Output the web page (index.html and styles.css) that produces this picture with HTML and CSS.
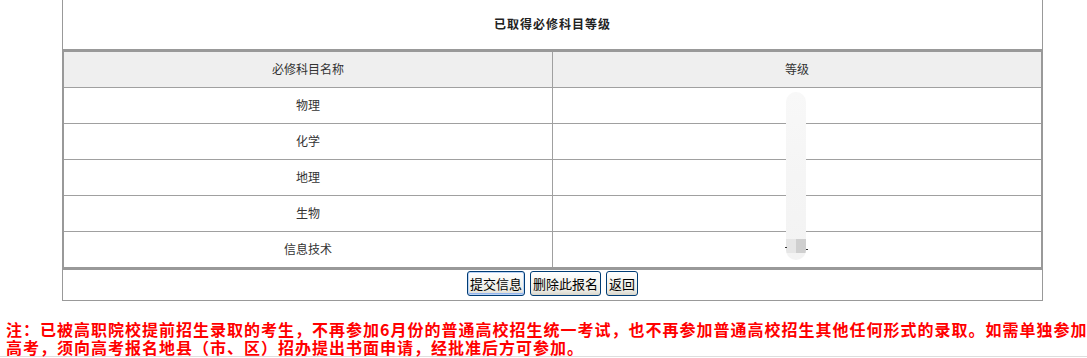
FILE: index.html
```html
<!DOCTYPE html>
<html lang="zh-CN">
<head>
<meta charset="utf-8">
<title>已取得必修科目等级</title>
<link rel="stylesheet" href="styles.css">
</head>
<body>
<div class="panel">
  <div class="caption">已取得必修科目等级</div>
  <div class="grades">
    <table class="grade-table">
      <thead>
        <tr><th class="name-col">必修科目名称</th><th>等级</th></tr>
      </thead>
      <tbody>
        <tr><td class="name-col">物理</td><td></td></tr>
        <tr><td class="name-col">化学</td><td></td></tr>
        <tr><td class="name-col">地理</td><td></td></tr>
        <tr><td class="name-col">生物</td><td></td></tr>
        <tr class="last"><td class="name-col">信息技术</td><td></td></tr>
      </tbody>
    </table>
    <div class="redact"><span class="tick tick-l"></span><span class="tick tick-r"></span></div>
  </div>
  <div class="actions">
    <button class="btn btn-focus" type="button">提交信息</button>
    <button class="btn" type="button">删除此报名</button>
    <button class="btn" type="button">返回</button>
  </div>
</div>
<p class="note">注：已被高职院校提前招生录取的考生，不再参加6月份的普通高校招生统一考试，也不再参加普通高校招生其他任何形式的录取。如需单独参加<br>高考，须向高考报名地县（市、区）招办提出书面申请，经批准后方可参加。</p>
<div class="rule"></div>
</body>
</html>
```
FILE: styles.css
```css
html, body {
  margin: 0;
  padding: 0;
  background: #fff;
}
body {
  font-family: "Noto Sans CJK SC", "Noto Sans", sans-serif;
  font-size: 12px;
  color: #333;
}
.panel {
  box-sizing: border-box;
  width: 981px;
  margin-left: 62px;
  display: flex;
  flex-direction: column;
}
.caption {
  box-sizing: border-box;
  height: 49px;
  padding-bottom: 3px;
  border-left: 1px solid #999;
  border-right: 1px solid #999;
  display: flex;
  align-items: center;
  justify-content: center;
  font-weight: bold;
  font-size: 12px;
  letter-spacing: 1px;
  color: #222;
}
.grades {
  position: relative;
}
.grade-table {
  box-sizing: border-box;
  width: 981px;
  table-layout: fixed;
  border-collapse: separate;
  border-spacing: 0;
  border-style: solid;
  border-color: #999;
  border-width: 3px 2px;
}
.grade-table th,
.grade-table td {
  height: 33px;
  padding: 0 0 2px;
  text-align: center;
  vertical-align: middle;
  font-weight: normal;
  font-size: 12px;
  color: #333;
  border-bottom: 1px solid #a0a0a0;
}
.grade-table th {
  background: #efefef;
}
.grade-table .last td {
  border-bottom: none;
}
.grade-table .name-col {
  width: 488px;
  border-right: 1px solid #a0a0a0;
}
.redact {
  position: absolute;
  left: 724px;
  top: 43px;
  width: 20px;
  height: 168px;
  border-radius: 10px;
  background:
    linear-gradient(to right, #e6e6e6 50%, #cfcfcf 50%) 0 147px / 100% 14px no-repeat,
    linear-gradient(to bottom, #f8f8f8 0, #f5f5f5 50%, #f3f3f3 100%);
}
.tick {
  position: absolute;
  top: 155px;
  width: 2px;
  height: 1px;
  background: #333;
}
.tick-l { left: -1px; }
.tick-r { right: -2px; top: 157px; }
.actions {
  box-sizing: border-box;
  height: 31px;
  border-left: 1px solid #999;
  border-right: 1px solid #999;
  border-bottom: 1px solid #999;
  display: flex;
  justify-content: center;
  align-items: flex-start;
  gap: 5px;
  padding-top: 1px;
}
.btn {
  box-sizing: border-box;
  height: 25px;
  margin: 0;
  padding: 0 2px;
  border: 1px solid #003c74;
  border-radius: 3px;
  background: linear-gradient(to bottom, #ffffff 0%, #f6f6f2 40%, #ecebe4 80%, #d8d6cc 100%);
  font-family: "Noto Sans CJK SC", "Noto Sans", sans-serif;
  font-size: 13px;
  line-height: 23px;
  color: #000;
}
.btn-focus {
  box-shadow: inset 0 0 0 1px #bcd4f6, inset 0 -1px 0 1px #91b4ee;
}
.note {
  margin: 19px 0 0;
  padding-left: 6px;
  white-space: nowrap;
  font-family: "Noto Sans CJK SC", "Noto Sans", sans-serif;
  font-size: 16px;
  font-weight: bold;
  line-height: 18px;
  letter-spacing: 1px;
  color: #ff0000;
}
.rule {
  border-top: 1px solid #dedede;
}
```
